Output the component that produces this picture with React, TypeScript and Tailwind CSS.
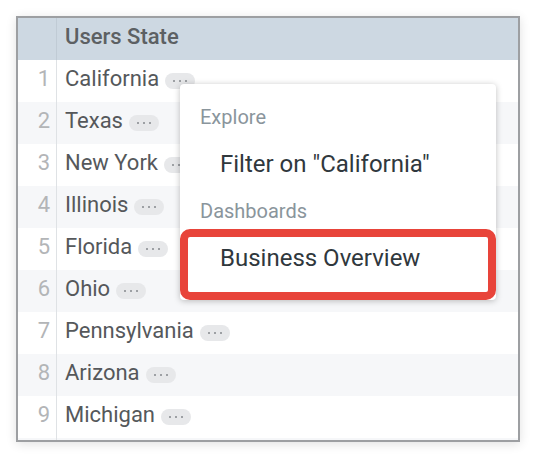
const STATES = ['California', 'Texas', 'New York', 'Illinois', 'Florida', 'Ohio', 'Pennsylvania', 'Arizona', 'Michigan']

function Dots() {
  return (
    <span className="ml-[6px] inline-flex h-4 w-[30px] items-center justify-center gap-[4px] rounded-full bg-[#e7e8ea]">
      <span className="h-[2px] w-[2px] rounded-full bg-[#85898d]" />
      <span className="h-[2px] w-[2px] rounded-full bg-[#85898d]" />
      <span className="h-[2px] w-[2px] rounded-full bg-[#85898d]" />
    </span>
  )
}

export default function App() {
  return (
    <div className="h-[460px] w-[536px] bg-white p-4" style={{ fontFamily: 'Roboto, "Noto Sans", sans-serif' }}>
      <div className="relative h-[426px] w-[504px] overflow-hidden border-2 border-[#9d9fa2] bg-white shadow-[0_2px_10px_rgba(0,0,0,0.12)]">
        {/* header */}
        <div className="flex h-[42px] bg-[#cdd8e2] text-[22px] font-medium text-[#5c6063]">
          <div className="w-[39px] border-r border-[#c0cbd5]" />
          <div className="flex items-center pl-[8px]">
            <span className="pb-[6px]">Users State</span>
          </div>
        </div>

        {/* rows */}
        {STATES.map((s, i) => (
          <div key={s} className={`flex h-[42px] text-[22px] ${i % 2 ? 'bg-[#f6f7f9]' : 'bg-white'}`}>
            <div className="flex w-[39px] items-center justify-end border-r border-[#dfe2e5] pr-[6px] text-[#b3b5b7]">
              <span className="pb-[6px]">{i + 1}</span>
            </div>
            <div className="flex items-center pl-[8px] text-[#55585b]">
              <span className="pb-[6px]">{s}</span>
              <Dots />
            </div>
          </div>
        ))}
        <div className="flex h-[42px] bg-[#f6f7f9]">
          <div className="w-[39px] border-r border-[#dfe2e5]" />
        </div>

        {/* context menu */}
        <div className="absolute left-[162px] top-[66px] w-[316px] rounded-[4px] bg-white pb-[19px] pt-[9px] shadow-[0_1px_6px_rgba(0,0,0,0.25)]">
          <div className="flex h-12 items-center pl-5 text-[20px] text-[#8a959c]">Explore</div>
          <div className="flex h-[46px] items-center pl-10 text-[24px] text-[#30383d]">Filter on "California"</div>
          <div className="flex h-12 items-center pl-5 text-[20px] text-[#8a959c]">Dashboards</div>
          <div className="flex h-[46px] items-center pl-10 text-[24px] text-[#30383d]">Business Overview</div>
          <div className="pointer-events-none absolute inset-x-0 bottom-0 top-[145px] rounded-[10px] border-8 border-[#e8443a]" />
        </div>
      </div>
    </div>
  )
}
